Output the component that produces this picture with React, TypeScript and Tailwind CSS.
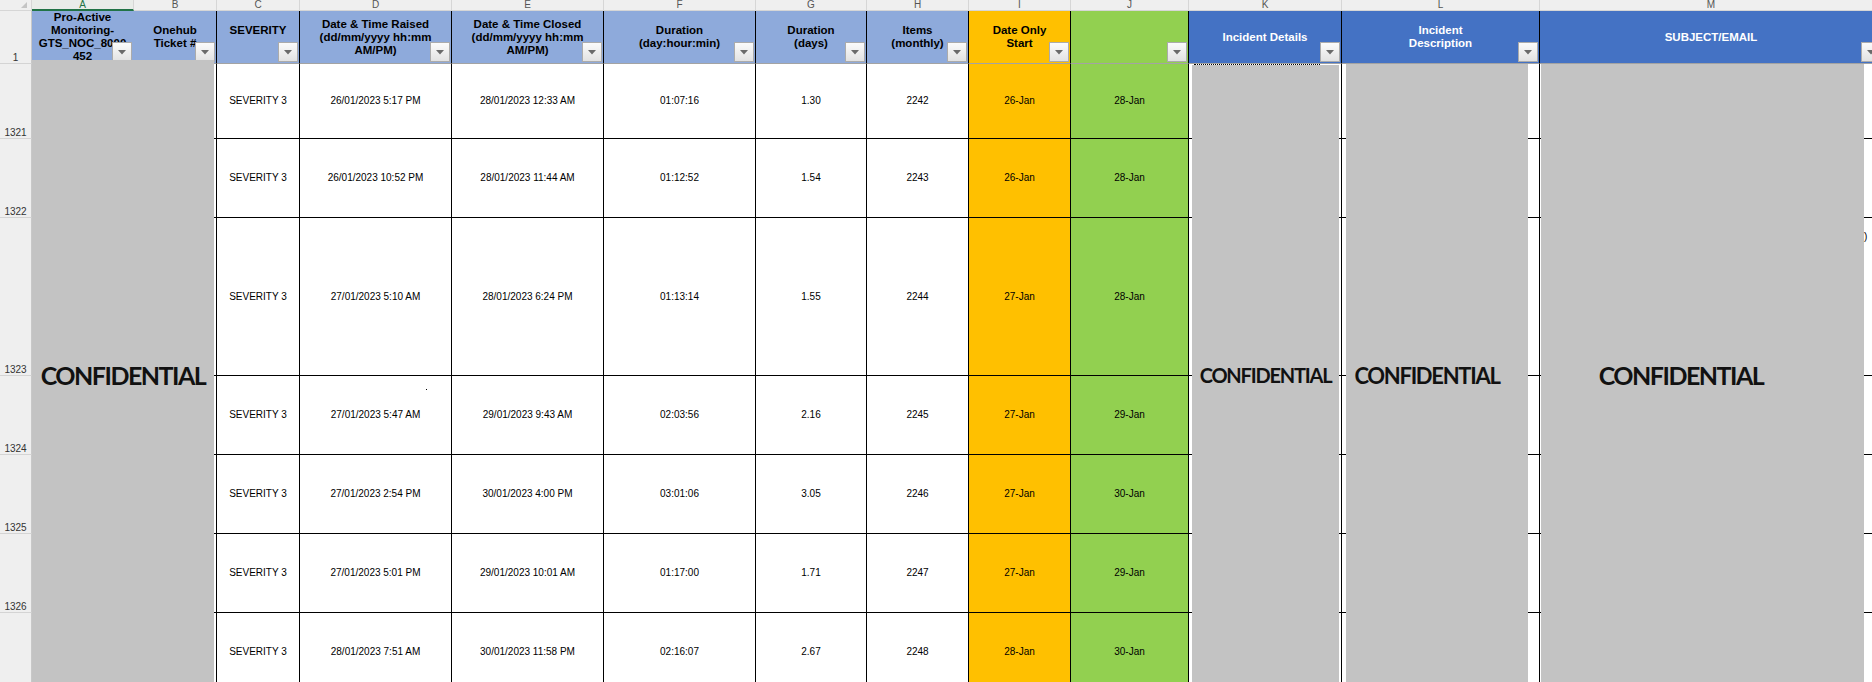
import React from 'react';

function Drop() {
  return (
    <span className="absolute right-[1px] bottom-[1px] w-[20px] h-[20px] border border-[#ababab] bg-linear-to-b from-[#fbfbfb] to-[#e2e2e2] flex items-center justify-center">
      <svg width="8" height="5" viewBox="0 0 8 5">
        <path d="M0 0H8L4 4.5Z" fill="#6a6a6a" />
      </svg>
    </span>
  );
}

const letters = [
  { l: '', cls: 'relative bg-[#efefef] border-r border-b border-[#d6d6d6]' },
  { l: 'A', cls: 'bg-[#e9ece9] border-r border-[#d6d6d6] border-b-2 border-b-[#217346] text-[#217346]' },
  { l: 'B', cls: 'bg-[#efefef] border-r border-b border-[#d6d6d6] text-[#555]' },
  { l: 'C', cls: 'bg-[#efefef] border-r border-b border-[#d6d6d6] text-[#555]' },
  { l: 'D', cls: 'bg-[#efefef] border-r border-b border-[#d6d6d6] text-[#555]' },
  { l: 'E', cls: 'bg-[#efefef] border-r border-b border-[#d6d6d6] text-[#555]' },
  { l: 'F', cls: 'bg-[#efefef] border-r border-b border-[#d6d6d6] text-[#555]' },
  { l: 'G', cls: 'bg-[#efefef] border-r border-b border-[#d6d6d6] text-[#555]' },
  { l: 'H', cls: 'bg-[#efefef] border-r border-b border-[#d6d6d6] text-[#555]' },
  { l: 'I', cls: 'bg-[#efefef] border-r border-b border-[#d6d6d6] text-[#555]' },
  { l: 'J', cls: 'bg-[#efefef] border-r border-b border-[#d6d6d6] text-[#555]' },
  { l: 'K', cls: 'bg-[#efefef] border-r border-b border-[#d6d6d6] text-[#555]' },
  { l: 'L', cls: 'bg-[#efefef] border-r border-b border-[#d6d6d6] text-[#555]' },
  { l: 'M', cls: 'bg-[#efefef] border-r border-b border-[#d6d6d6] text-[#555]' },
];

const headers: { lines: string[]; cls: string }[] = [
  { lines: ['Pro-Active', 'Monitoring-', 'GTS_NOC_8000', '452'], cls: 'bg-[#8eaadb] text-black border-r-[#8eaadb]' },
  { lines: ['Onehub', 'Ticket #'], cls: 'bg-[#8eaadb] text-black border-r-black' },
  { lines: ['SEVERITY', '\u00a0'], cls: 'bg-[#8eaadb] text-black border-r-black' },
  { lines: ['Date & Time Raised', '(dd/mm/yyyy hh:mm', 'AM/PM)'], cls: 'bg-[#8eaadb] text-black border-r-black' },
  { lines: ['Date & Time Closed', '(dd/mm/yyyy hh:mm', 'AM/PM)'], cls: 'bg-[#8eaadb] text-black border-r-black' },
  { lines: ['Duration', '(day:hour:min)'], cls: 'bg-[#8eaadb] text-black border-r-black' },
  { lines: ['Duration', '(days)'], cls: 'bg-[#8eaadb] text-black border-r-black' },
  { lines: ['Items', '(monthly)'], cls: 'bg-[#8eaadb] text-black border-r-black' },
  { lines: ['Date Only', 'Start'], cls: 'bg-[#ffc000] text-black border-r-black' },
  { lines: [], cls: 'bg-[#92d050] text-black border-r-black' },
  { lines: ['Incident Details'], cls: 'bg-[#4472c4] text-white border-r-black' },
  { lines: ['Incident', 'Description'], cls: 'bg-[#4472c4] text-white border-r-black' },
  { lines: ['SUBJECT/EMAIL'], cls: 'bg-[#4472c4] text-white border-r-black' },
];

const rows = [
  { n: '1321', d: ['26/01/2023 5:17 PM', '28/01/2023 12:33 AM', '01:07:16', '1.30', '2242', '26-Jan', '28-Jan'] },
  { n: '1322', d: ['26/01/2023 10:52 PM', '28/01/2023 11:44 AM', '01:12:52', '1.54', '2243', '26-Jan', '28-Jan'] },
  { n: '1323', d: ['27/01/2023 5:10 AM', '28/01/2023 6:24 PM', '01:13:14', '1.55', '2244', '27-Jan', '28-Jan'] },
  { n: '1324', d: ['27/01/2023 5:47 AM', '29/01/2023 9:43 AM', '02:03:56', '2.16', '2245', '27-Jan', '29-Jan'] },
  { n: '1325', d: ['27/01/2023 2:54 PM', '30/01/2023 4:00 PM', '03:01:06', '3.05', '2246', '27-Jan', '30-Jan'] },
  { n: '1326', d: ['27/01/2023 5:01 PM', '29/01/2023 10:01 AM', '01:17:00', '1.71', '2247', '27-Jan', '29-Jan'] },
  { n: '', d: ['28/01/2023 7:51 AM', '30/01/2023 11:58 PM', '02:16:07', '2.67', '2248', '28-Jan', '30-Jan'] },
];

const cell = 'flex items-center justify-center border-r border-b border-black text-[10px] leading-[12px] text-black whitespace-nowrap';

export default function App() {
  return (
    <div className="relative w-[1872px] h-[682px] overflow-hidden bg-white font-['Liberation_Sans',Arial,sans-serif]">
      <div className="grid grid-cols-[32px_102px_83px_83px_152px_152px_152px_111px_102px_102px_118px_153px_198px_343px] grid-rows-[11px_53px_75px_79px_158px_79px_79px_79px_79px] w-[1883px]">
        {letters.map((c, i) => (
          <div key={'l' + i} className={'flex items-center justify-center text-[10px] leading-[10px] ' + c.cls}>
            {i === 0 ? (
              <svg className="absolute right-[4px] bottom-[2px]" width="6" height="6" viewBox="0 0 6 6">
                <path d="M6 0V6H0Z" fill="#c4c4c4" />
              </svg>
            ) : (
              c.l
            )}
          </div>
        ))}

        <div className="flex items-end justify-center pb-0 bg-[#efefef] border-r border-r-[#c8c8c8] border-b border-b-[#d4d4d4] text-[10px] leading-[10px] text-[#333]">
          1
        </div>
        {headers.map((h, i) => (
          <div
            key={'h' + i}
            className={'relative flex flex-col items-center justify-center text-center border-r border-b border-b-[#a3a3a3] font-bold text-[11.5px] leading-[13px] whitespace-nowrap overflow-visible ' + h.cls}
          >
            {h.lines.map((t, j) => (
              <div key={j}>{t}</div>
            ))}
            <Drop />
          </div>
        ))}

        {rows.map((r, idx) => (
          <React.Fragment key={'r' + idx}>
            <div className="flex items-end justify-center pb-0 bg-[#efefef] border-r border-r-[#c8c8c8] border-b border-b-[#d4d4d4] text-[10px] leading-[10px] text-[#333]">
              {r.n}
            </div>
            <div className={cell}></div>
            <div className={cell}></div>
            <div className={cell}>SEVERITY 3</div>
            <div className={cell}>{r.d[0]}</div>
            <div className={cell}>{r.d[1]}</div>
            <div className={cell}>{r.d[2]}</div>
            <div className={cell}>{r.d[3]}</div>
            <div className={cell}>{r.d[4]}</div>
            <div className={cell + ' bg-[#ffc000]'}>{r.d[5]}</div>
            <div className={cell + ' bg-[#92d050]'}>{r.d[6]}</div>
            <div className={cell}></div>
            <div className={cell}></div>
            <div className={cell}></div>
          </React.Fragment>
        ))}
      </div>

      {/* redaction boxes */}
      <div className="absolute left-[32px] top-[60px] w-[182px] bottom-0 bg-[#c3c3c3] flex flex-col items-center">
        <div className="mt-[303px] font-['Lato',sans-serif] font-bold text-[25px] leading-[25px] tracking-[-1.5px] text-[#111]">CONFIDENTIAL</div>
      </div>
      <div className="absolute left-[1192px] top-[65px] w-[147px] bottom-0 bg-[#c3c3c3] flex flex-col items-center">
        <div className="mt-[300px] font-['Lato',sans-serif] font-bold text-[20px] leading-[20px] tracking-[-1.2px] text-[#111]">CONFIDENTIAL</div>
      </div>
      <div className="absolute left-[1346px] top-[64px] w-[182px] bottom-0 bg-[#c3c3c3] flex flex-col items-center pr-[20px]">
        <div className="mt-[301px] font-['Lato',sans-serif] font-bold text-[22px] leading-[22px] tracking-[-1.3px] text-[#111]">CONFIDENTIAL</div>
      </div>
      <div className="absolute left-[1541px] top-[64px] w-[323px] bottom-0 bg-[#c3c3c3] flex flex-col items-center pr-[43px]">
        <div className="mt-[299px] font-['Lato',sans-serif] font-bold text-[25px] leading-[25px] tracking-[-1.5px] text-[#111]">CONFIDENTIAL</div>
      </div>

      {/* small leftover marks */}
      <div className="absolute left-[1194px] top-[64px] w-[126px] h-0 border-t border-dotted border-black"></div>
      <div className="absolute left-[426px] top-[389px] w-[1px] h-[1px] bg-black"></div>
      <div className="absolute left-[1864px] top-[231px] text-[10px] leading-[12px] text-black">)</div>
    </div>
  );
}
